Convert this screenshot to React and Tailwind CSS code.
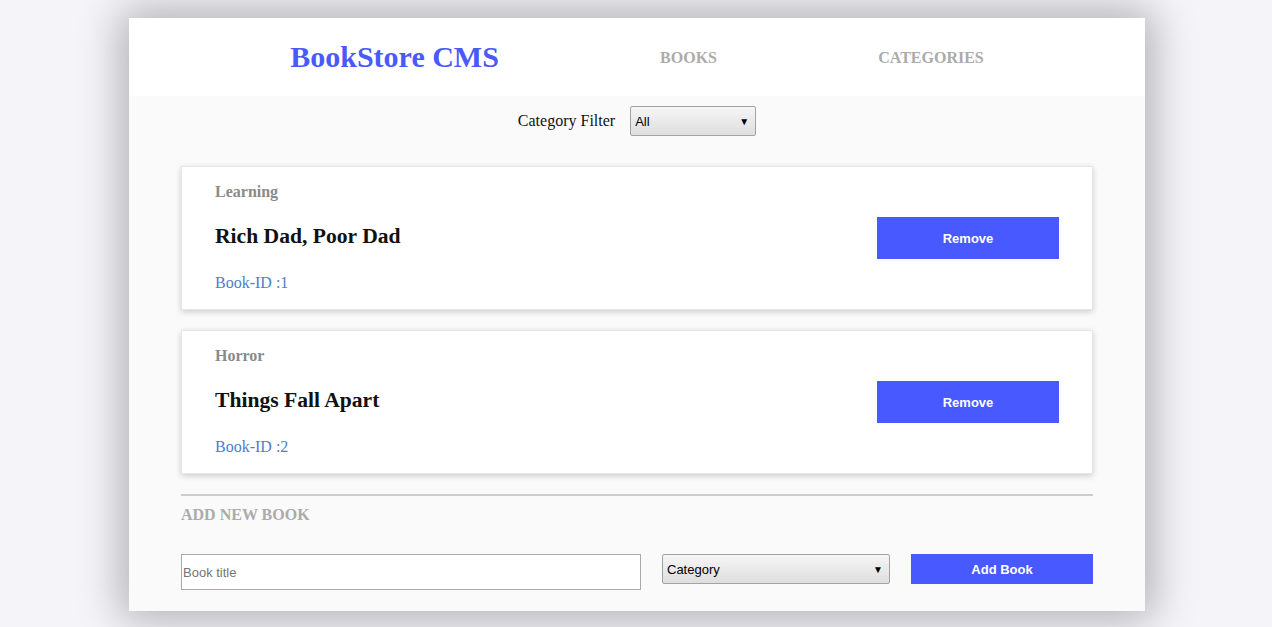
import React from "react";

const serif = { fontFamily: '"Liberation Serif", "Times New Roman", serif' };
const sans = { fontFamily: '"Liberation Sans", Arial, sans-serif' };

function FakeSelect({ label, className }) {
  return (
    <div
      className={`flex items-center justify-between border border-[#a3a3a3] rounded-[2px] bg-gradient-to-b from-[#f6f6f6] to-[#dedede] pl-[4px] pr-[6px] text-[13px] text-black ${className}`}
      style={sans}
    >
      <span>{label}</span>
      <span className="text-[10px] leading-none">▼</span>
    </div>
  );
}

function Card({ category, title, id }) {
  return (
    <div className="flex items-center justify-between bg-white border border-[#e6e6e6] shadow-[0_2px_6px_rgba(0,0,0,0.18)] h-[144px] pl-[33px] pr-[33px]">
      <div className="flex flex-col -mt-[1px]" style={serif}>
        <div className="text-[16px] leading-[20px] font-bold text-[#8a8a8a]">{category}</div>
        <div className="text-[21.6px] leading-[28px] font-bold text-[#111] mt-[20px]">{title}</div>
        <div className="text-[16px] leading-[20px] text-[#4f7ccb] mt-[23px]">{id}</div>
      </div>
      <button
        className="w-[182px] h-[42px] bg-[#4759ff] text-white text-[13px] font-bold pt-[1px]"
        style={sans}
      >
        Remove
      </button>
    </div>
  );
}

export default function App() {
  return (
    <div className="min-h-[627px] w-full bg-[#f4f4f9] pt-[18px] pb-[16px] pl-[2px]">
      <div className="mx-auto w-[1016px] bg-[#fafafa] shadow-[0_0_40px_8px_rgba(0,0,0,0.28)]">
        <header className="h-[78px] bg-white flex items-center justify-evenly" style={serif}>
          <div className="text-[30px] font-bold text-[#4a5afa] leading-none">BookStore CMS</div>
          <div className="text-[16px] font-bold text-[#ababab] mt-[2px]">BOOKS</div>
          <div className="text-[16px] font-bold text-[#ababab] mt-[2px]">CATEGORIES</div>
        </header>
        <div className="flex items-center justify-center mt-[10px] gap-[15px]">
          <span className="text-[16px] text-[#111]" style={serif}>Category Filter</span>
          <FakeSelect label="All" className="w-[126px] h-[30px] pt-[1px]" />
        </div>
        <div className="mx-[52px] mt-[30px] flex flex-col gap-[20px]">
          <Card category="Learning" title="Rich Dad, Poor Dad" id="Book-ID :1" />
          <Card category="Horror" title="Things Fall Apart" id="Book-ID :2" />
        </div>
        <div className="mx-[52px] mt-[20px] border-t-2 border-[#cccccc]">
          <div className="mt-[9px] text-[16px] font-bold text-[#ababab] leading-[20px]" style={serif}>ADD NEW BOOK</div>
          <div className="flex items-start justify-between mt-[29px] pb-[21px]">
            <div
              className="w-[460px] h-[36px] bg-white border border-[#a9a9a9] flex items-center pl-[1px] pt-[2px] text-[13px] text-[#757575]"
              style={sans}
            >
              Book title
            </div>
            <FakeSelect label="Category" className="w-[228px] h-[30px] pt-[2px]" />
            <button
              className="w-[182px] h-[30px] bg-[#4759ff] text-white text-[13px] font-bold pt-[2px]"
              style={sans}
            >
              Add Book
            </button>
          </div>
        </div>
      </div>
    </div>
  );
}
